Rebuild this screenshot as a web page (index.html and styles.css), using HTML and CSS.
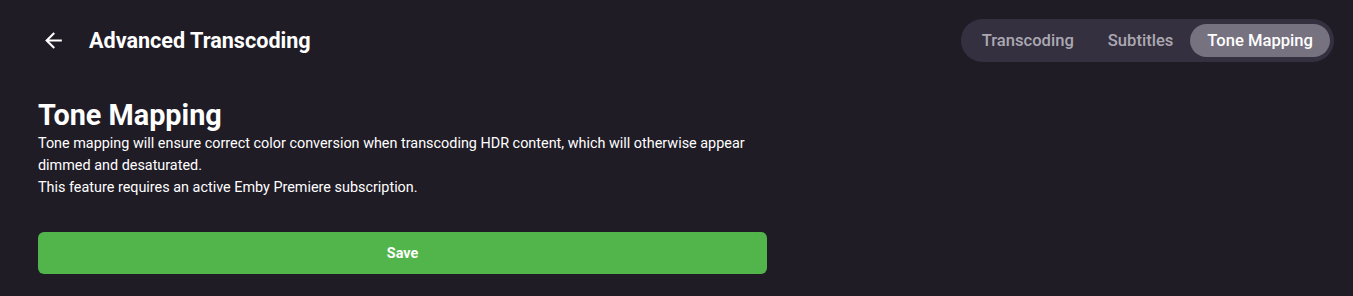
FILE: index.html
```html
<!DOCTYPE html>
<html lang="en">
<head>
    <meta charset="UTF-8">
    <meta name="viewport" content="width=device-width, initial-scale=1.0">
    <title>Advanced Transcoding</title>
    <link rel="stylesheet" href="styles.css">
</head>
<body>
    <header class="header">
        <button type="button" class="back-btn" aria-label="Back">
            <svg viewBox="0 0 24 24" width="24" height="24"><path d="M20 11H7.83l5.59-5.59L12 4l-8 8 8 8 1.41-1.41L7.83 13H20v-2z" fill="currentColor"/></svg>
        </button>
        <h2 class="page-title">Advanced Transcoding</h2>
        <nav class="tabs">
            <a class="tab">Transcoding</a>
            <a class="tab">Subtitles</a>
            <a class="tab active">Tone Mapping</a>
        </nav>
    </header>
    <div class="content">
        <h1 class="section-title">Tone Mapping</h1>
        <p class="desc">Tone mapping will ensure correct color conversion when transcoding HDR content, which will otherwise appear dimmed and desaturated.</p>
        <p class="desc">This feature requires an active Emby Premiere subscription.</p>
        <button type="button" class="save-btn">Save</button>
    </div>
</body>
</html>
```

FILE: styles.css
```css
body {
    margin: 0;
    background-color: #1f1c26;
    color: #fff;
    font-family: Roboto, "Noto Sans", sans-serif;
    height: 296px;
    overflow: hidden;
}
.header {
    display: flex;
    align-items: center;
    height: 42px;
    padding: 19px 19px 0 33px;
}
.back-btn {
    display: flex;
    align-items: center;
    justify-content: center;
    width: 40px;
    height: 40px;
    padding: 0;
    border: none;
    background: none;
    color: #fff;
    cursor: pointer;
}
.back-btn svg {
    width: 25px;
    height: 25px;
}
.page-title {
    margin: 0 0 0 16px;
    font-size: 21.6px;
    font-weight: 700;
    flex: 1;
}
.tabs {
    display: flex;
    align-items: center;
    height: 43px;
    padding: 0 4px;
    box-sizing: border-box;
    background-color: #35303f;
    border-radius: 22px;
}
.tab {
    display: flex;
    align-items: center;
    height: 33px;
    padding: 0 17px;
    font-size: 16.6px;
    font-weight: 500;
    color: #aba8b2;
    border-radius: 17px;
    cursor: pointer;
    white-space: nowrap;
}
.tab.active {
    background-color: #77727f;
    color: #fff;
}
.content {
    width: 729px;
    margin-left: 38px;
    padding-top: 36px;
}
.section-title {
    margin: 0;
    font-size: 28.8px;
    font-weight: 700;
    line-height: 36px;
}
.desc {
    margin: 0;
    font-size: 14.4px;
    line-height: 22px;
}
.save-btn {
    display: block;
    width: 100%;
    height: 42px;
    margin-top: 33px;
    border: none;
    border-radius: 6px;
    background-color: #52b54b;
    color: #fff;
    font-family: Roboto, "Noto Sans", sans-serif;
    font-size: 14.4px;
    font-weight: 700;
    cursor: pointer;
}
```
